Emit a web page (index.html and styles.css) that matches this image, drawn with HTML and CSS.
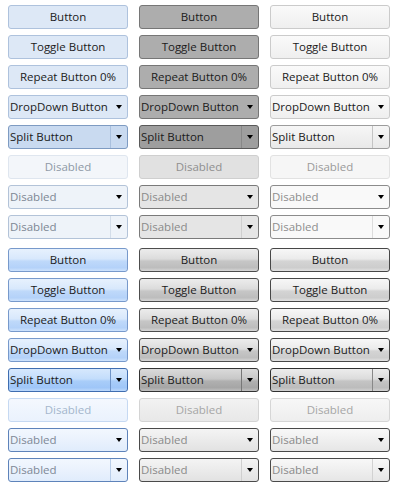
FILE: index.html
```html
<!DOCTYPE html>
<html>
<head>
<meta charset="utf-8">
<link rel="stylesheet" href="styles.css">
</head>
<body>
<div class="page">
  <div class="group flat">
    <div class="col blue">
      <div class="btn">Button</div>
      <div class="btn">Toggle Button</div>
      <div class="btn">Repeat Button 0%</div>
      <div class="btn dd"><span class="lbl">DropDown Button</span><span class="arr"></span></div>
      <div class="btn split"><span class="lbl">Split Button</span><span class="part"><span class="arr"></span></span></div>
      <div class="btn dis">Disabled</div>
      <div class="btn dd dis2"><span class="lbl">Disabled</span><span class="arr"></span></div>
      <div class="btn split dis2"><span class="lbl">Disabled</span><span class="part"><span class="arr"></span></span></div>
    </div>
    <div class="col gray">
      <div class="btn">Button</div>
      <div class="btn">Toggle Button</div>
      <div class="btn">Repeat Button 0%</div>
      <div class="btn dd"><span class="lbl">DropDown Button</span><span class="arr"></span></div>
      <div class="btn split"><span class="lbl">Split Button</span><span class="part"><span class="arr"></span></span></div>
      <div class="btn dis">Disabled</div>
      <div class="btn dd dis2"><span class="lbl">Disabled</span><span class="arr"></span></div>
      <div class="btn split dis2"><span class="lbl">Disabled</span><span class="part"><span class="arr"></span></span></div>
    </div>
    <div class="col white">
      <div class="btn">Button</div>
      <div class="btn">Toggle Button</div>
      <div class="btn">Repeat Button 0%</div>
      <div class="btn dd"><span class="lbl">DropDown Button</span><span class="arr"></span></div>
      <div class="btn split"><span class="lbl">Split Button</span><span class="part"><span class="arr"></span></span></div>
      <div class="btn dis">Disabled</div>
      <div class="btn dd dis2"><span class="lbl">Disabled</span><span class="arr"></span></div>
      <div class="btn split dis2"><span class="lbl">Disabled</span><span class="part"><span class="arr"></span></span></div>
    </div>
  </div>
  <div class="group gloss">
    <div class="col blue">
      <div class="btn">Button</div>
      <div class="btn">Toggle Button</div>
      <div class="btn">Repeat Button 0%</div>
      <div class="btn dd"><span class="lbl">DropDown Button</span><span class="arr"></span></div>
      <div class="btn split"><span class="lbl">Split Button</span><span class="part"><span class="arr"></span></span></div>
      <div class="btn dis">Disabled</div>
      <div class="btn dd dis2"><span class="lbl">Disabled</span><span class="arr"></span></div>
      <div class="btn split dis2"><span class="lbl">Disabled</span><span class="part"><span class="arr"></span></span></div>
    </div>
    <div class="col gray">
      <div class="btn">Button</div>
      <div class="btn">Toggle Button</div>
      <div class="btn">Repeat Button 0%</div>
      <div class="btn dd"><span class="lbl">DropDown Button</span><span class="arr"></span></div>
      <div class="btn split"><span class="lbl">Split Button</span><span class="part"><span class="arr"></span></span></div>
      <div class="btn dis">Disabled</div>
      <div class="btn dd dis2"><span class="lbl">Disabled</span><span class="arr"></span></div>
      <div class="btn split dis2"><span class="lbl">Disabled</span><span class="part"><span class="arr"></span></span></div>
    </div>
    <div class="col white">
      <div class="btn">Button</div>
      <div class="btn">Toggle Button</div>
      <div class="btn">Repeat Button 0%</div>
      <div class="btn dd"><span class="lbl">DropDown Button</span><span class="arr"></span></div>
      <div class="btn split"><span class="lbl">Split Button</span><span class="part"><span class="arr"></span></span></div>
      <div class="btn dis">Disabled</div>
      <div class="btn dd dis2"><span class="lbl">Disabled</span><span class="arr"></span></div>
      <div class="btn split dis2"><span class="lbl">Disabled</span><span class="part"><span class="arr"></span></span></div>
    </div>
  </div>
</div>
</body>
</html>
```
FILE: styles.css
```css
* { box-sizing: border-box; }
html, body { margin: 0; padding: 0; background: #fff; }
body {
  font-family: "Open Sans", "Noto Sans", sans-serif;
  font-size: 11.5px;
  color: #1b1b1b;
}
.page {
  padding: 5px 0 0 8px;
  display: flex;
  flex-direction: column;
  gap: 9px;
}
.group {
  display: flex;
  gap: 11px;
}
.col {
  width: 120px;
  display: flex;
  flex-direction: column;
  gap: 6px;
}
.btn {
  height: 24px;
  border: 1px solid;
  border-radius: 3px;
  display: flex;
  align-items: center;
  justify-content: center;
  line-height: 1;
  white-space: nowrap;
}
.dd, .split {
  justify-content: space-between;
  padding-left: 1px;
}
.dd { padding-right: 5px; }
.part {
  align-self: stretch;
  width: 17px;
  border-left: 1px solid;
  display: flex;
  align-items: center;
  justify-content: center;
}
.arr {
  width: 0;
  height: 0;
  border-left: 3.5px solid transparent;
  border-right: 3.5px solid transparent;
  border-top: 4px solid #000;
}

/* flat group */
.flat .blue .btn { background: #dde8f6; border-color: #aec2dd; }
.flat .blue .split { background: #c9daf0; border-color: #7e9bc2; }
.flat .blue .split .part { border-color: #a9c0de; }
.flat .blue .dis { background: #f3f6fa; border-color: #dfe6ef; color: #8e99a6; }
.flat .blue .dis2 { background: #eef3f9; border-color: #b3c3d8; color: #7d8794; }
.flat .blue .dis2 .part { border-color: #d3dde9; }

.flat .gray .btn { background: #adadad; border-color: #767676; }
.flat .gray .split { background: #9e9e9e; border-color: #595959; }
.flat .gray .split .part { border-color: #888; }
.flat .gray .dis { background: #e1e1e1; border-color: #cfcfcf; color: #8f8f8f; }
.flat .gray .dis2 { background: #e5e5e5; border-color: #7a7a7a; color: #8a8a8a; }
.flat .gray .dis2 .part { border-color: #cfcfcf; }

.flat .white .btn { background: linear-gradient(#fafafa, #efefef); border-color: #cbcbcb; }
.flat .white .split { background: linear-gradient(#f6f6f6, #e9e9e9); border-color: #9c9c9c; }
.flat .white .split .part { border-color: #c4c4c4; }
.flat .white .dis { background: #f6f6f6; border-color: #e2e2e2; color: #9a9a9a; }
.flat .white .dis2 { background: #f9f9f9; border-color: #8c8c8c; color: #8e8e8e; }
.flat .white .dis2 .part { border-color: #dcdcdc; }

/* glossy group */
.gloss .blue .btn {
  background: linear-gradient(#e7f1fd 0%, #d8e8fc 45%, #bfd9fa 55%, #b4d2f9 85%, #cde2fc 100%);
  border-color: #7799cb;
}
.gloss .blue .split {
  background: linear-gradient(#d6e8fd 0%, #c3ddfc 45%, #a9cdf9 55%, #9fc6f8 85%, #bcd8fb 100%);
  border-color: #3f6db0;
}
.gloss .blue .split .part { border-color: #6f94c8; }
.gloss .blue .dis {
  background: linear-gradient(#f4f8fe, #eaf2fd);
  border-color: #c6d9f2; color: #a4b6cc;
}
.gloss .blue .dis2 {
  background: linear-gradient(#f2f7fe 0%, #eaf2fd 50%, #e0ecfc 100%);
  border-color: #5e83ba; color: #7e8896;
}
.gloss .blue .dis2 .part { border-color: #b8cde9; }

.gloss .gray .btn {
  background: linear-gradient(#ececec 0%, #dcdcdc 45%, #c6c6c6 55%, #bdbdbd 85%, #d6d6d6 100%);
  border-color: #4d4d4d;
}
.gloss .gray .split {
  background: linear-gradient(#dadada 0%, #c8c8c8 45%, #b0b0b0 55%, #a6a6a6 85%, #c0c0c0 100%);
  border-color: #333;
}
.gloss .gray .split .part { border-color: #777; }
.gloss .gray .dis {
  background: linear-gradient(#f2f2f2, #e8e8e8);
  border-color: #d4d4d4; color: #a6a6a6;
}
.gloss .gray .dis2 {
  background: linear-gradient(#f4f4f4 0%, #ebebeb 50%, #e2e2e2 100%);
  border-color: #4a4a4a; color: #8a8a8a;
}
.gloss .gray .dis2 .part { border-color: #cfcfcf; }

.gloss .white .btn {
  background: linear-gradient(#f7f7f7 0%, #ebebeb 45%, #d4d4d4 55%, #cdcdcd 85%, #e2e2e2 100%);
  border-color: #474747;
}
.gloss .white .split {
  background: linear-gradient(#ececec 0%, #dcdcdc 45%, #c4c4c4 55%, #bcbcbc 85%, #d2d2d2 100%);
  border-color: #303030;
}
.gloss .white .split .part { border-color: #888; }
.gloss .white .dis {
  background: linear-gradient(#f7f7f7, #eeeeee);
  border-color: #d6d6d6; color: #a6a6a6;
}
.gloss .white .dis2 {
  background: linear-gradient(#f8f8f8 0%, #efefef 50%, #e6e6e6 100%);
  border-color: #4a4a4a; color: #8a8a8a;
}
.gloss .white .dis2 .part { border-color: #d2d2d2; }
```
